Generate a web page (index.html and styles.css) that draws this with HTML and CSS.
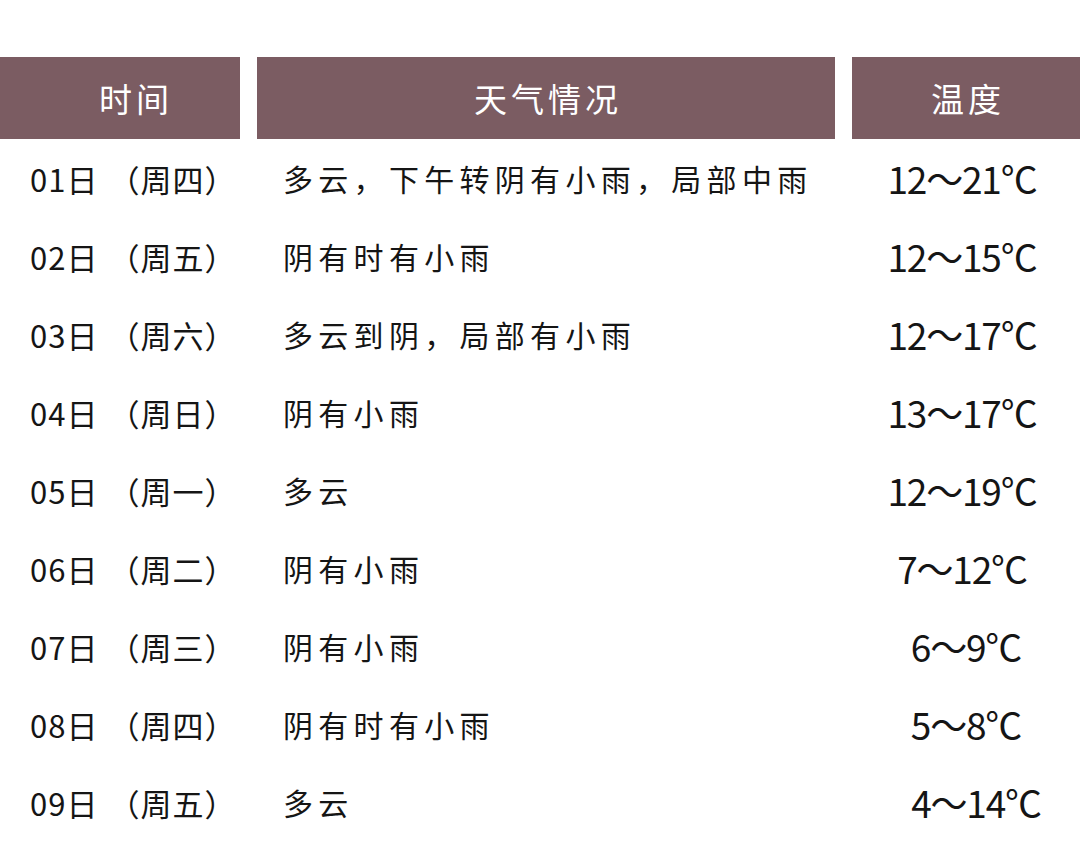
FILE: index.html
```html
<!DOCTYPE html>
<html lang="zh-CN">
<head>
<meta charset="utf-8">
<link rel="stylesheet" href="styles.css">
</head>
<body>
<div class="table">
  <div class="head">
    <div class="hcell c1">时间</div>
    <div class="hcell c2">天气情况</div>
    <div class="hcell c3">温度</div>
  </div>
  <div class="row"><div class="date"><span class="num">01</span>日<span class="wk">（周四）</span></div><div class="desc">多云，下午转阴有小雨，局部中雨</div><div class="temp">12～21℃</div></div>
  <div class="row"><div class="date"><span class="num">02</span>日<span class="wk">（周五）</span></div><div class="desc">阴有时有小雨</div><div class="temp">12～15℃</div></div>
  <div class="row"><div class="date"><span class="num">03</span>日<span class="wk">（周六）</span></div><div class="desc">多云到阴，局部有小雨</div><div class="temp">12～17℃</div></div>
  <div class="row"><div class="date"><span class="num">04</span>日<span class="wk">（周日）</span></div><div class="desc">阴有小雨</div><div class="temp">13～17℃</div></div>
  <div class="row"><div class="date"><span class="num">05</span>日<span class="wk">（周一）</span></div><div class="desc">多云</div><div class="temp">12～19℃</div></div>
  <div class="row"><div class="date"><span class="num">06</span>日<span class="wk">（周二）</span></div><div class="desc">阴有小雨</div><div class="temp">7～12℃</div></div>
  <div class="row"><div class="date"><span class="num">07</span>日<span class="wk">（周三）</span></div><div class="desc">阴有小雨</div><div class="temp temp-r">6～9℃</div></div>
  <div class="row"><div class="date"><span class="num">08</span>日<span class="wk">（周四）</span></div><div class="desc">阴有时有小雨</div><div class="temp temp-r">5～8℃</div></div>
  <div class="row"><div class="date"><span class="num">09</span>日<span class="wk">（周五）</span></div><div class="desc">多云</div><div class="temp temp-rr">4～14℃</div></div>
</div>
</body>
</html>
```
FILE: styles.css
```css
html, body {
  margin: 0;
  padding: 0;
  background: #ffffff;
}
body {
  font-family: "Noto Sans CJK SC", "Noto Sans", sans-serif;
  color: #151515;
  font-weight: 400;
}
.table {
  padding-top: 57px;
}
.head, .row {
  display: grid;
  grid-template-columns: 240px 578px 228px;
  column-gap: 17px;
}
.head {
  height: 82px;
}
.hcell {
  background: #7b5c62;
  color: #ffffff;
  font-size: 33px;
  letter-spacing: 4px;
  display: flex;
  align-items: center;
  justify-content: center;
  line-height: 1;
}
.hcell.c1 { padding-left: 32px; }
.hcell.c2 { padding-left: 4px; }
.hcell.c3 { padding-left: 4px; }
.row {
  height: 78px;
  align-items: center;
}
.date {
  font-size: 31px;
  padding-left: 30px;
  letter-spacing: 1px;
  line-height: 1;
  white-space: nowrap;
}
.num {
  font-weight: 400;
}
.wk {
  margin-left: 10px;
}
.desc {
  font-size: 30px;
  letter-spacing: 5.3px;
  padding-left: 26px;
  line-height: 1;
}
.temp {
  font-size: 37px;
  text-align: center;
  letter-spacing: -1.2px;
  padding-right: 8px;
  line-height: 1;
}
.temp.temp-r {
  padding-right: 0;
}
.temp.temp-rr {
  padding-left: 28px;
}
```
